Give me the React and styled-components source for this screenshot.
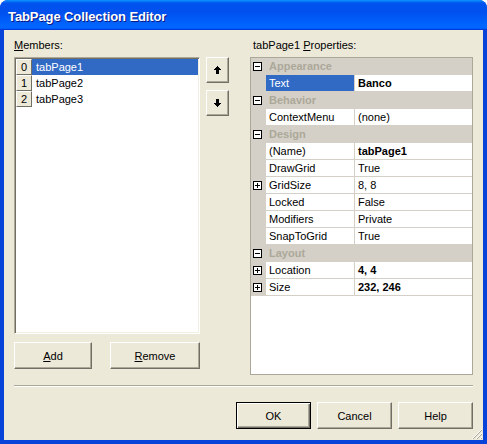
import React from "react";
import styled, { createGlobalStyle } from "styled-components";

const GlobalStyle = createGlobalStyle`
  html, body { margin: 0; padding: 0; background: #ffffff; }
  body { font-family: "Liberation Sans", Arial, sans-serif; font-size: 11px; color: #000; }
  * { box-sizing: border-box; }
`;

const Window = styled.div`
  width: 487px;
  height: 444px;
  display: flex;
  flex-direction: column;
  background: #0843d9;
  border-radius: 8px 8px 0 0;
  overflow: hidden;
`;

const TitleBar = styled.div`
  height: 30px;
  flex: none;
  display: flex;
  align-items: center;
  padding: 2px 0 0 8px;
  background: linear-gradient(180deg, #0997ff 0%, #0053ee 10%, #0050ee 40%, #0066ff 86%, #0066ff 92%, #005bff 95%, #003dd7 97%, #003dd7 100%);
  color: #fff;
  font-family: "Liberation Sans", Arial, sans-serif;
  font-weight: bold;
  font-size: 13px;
  text-shadow: 1px 1px 0 #0a1883;
  letter-spacing: -0.1px;
`;

const Client = styled.div`
  position: relative;
  flex: 1;
  margin: 0 4px 4px 4px;
  background: #ece9d8;
  padding: 9px 10px 11px 10px;
  display: flex;
  flex-direction: column;
`;

const Top = styled.div`
  display: flex;
  height: 336px;
`;

const LeftCol = styled.div`
  width: 186px;
  display: flex;
  flex-direction: column;
`;

const Label = styled.div`
  height: 13px;
  line-height: 13px;
  margin-bottom: 5px;
  padding-left: ${(p) => p.$indent || 0}px;
  white-space: nowrap;
`;

const Key = styled.span`
  text-decoration: underline;
  text-underline-offset: 1px;
`;

const ListBox = styled.div`
  height: 277px;
  background: #fff;
  border: 1px solid;
  border-color: #aca899 #fff #fff #aca899;
  box-shadow: inset 1px 1px 0 #716f64, inset -1px -1px 0 #f1efe2;
  padding: 1px;
`;

const ListRow = styled.div`
  display: flex;
  height: 16px;
`;

const IndexCell = styled.div`
  width: 16px;
  height: 16px;
  flex: none;
  background: #ece9d8;
  border: 1px solid;
  border-color: #fff #716f64 #716f64 #fff;
  text-align: center;
  line-height: 14px;
`;

const ItemText = styled.div`
  flex: 1;
  line-height: 16px;
  padding-left: 4px;
  background: ${(p) => (p.$selected ? "#316ac5" : "transparent")};
  color: ${(p) => (p.$selected ? "#fff" : "#000")};
`;

const ButtonRow = styled.div`
  display: flex;
  gap: ${(p) => p.$gap}px;
  justify-content: ${(p) => p.$justify || "flex-start"};
  margin-top: ${(p) => p.$top || 0}px;
`;

const Button = styled.button`
  width: ${(p) => p.$w}px;
  height: ${(p) => p.$h || 27}px;
  padding: 0;
  background: #ece9d8;
  font-family: "Liberation Sans", Arial, sans-serif;
  font-size: 11px;
  color: #000;
  border: 1px solid;
  border-color: ${(p) => (p.$default ? "#000" : "#fff #716f64 #716f64 #fff")};
  box-shadow: ${(p) =>
    p.$default
      ? "inset 1px 1px 0 #fff, inset -1px -1px 0 #716f64, inset -2px -2px 0 #aca899"
      : "inset -1px -1px 0 #aca899"};
  display: flex;
  align-items: center;
  justify-content: center;
`;

const ArrowCol = styled.div`
  width: 23px;
  margin-left: 6px;
  padding-top: 18px;
  display: flex;
  flex-direction: column;
  gap: 7px;
`;

const RightCol = styled.div`
  width: 223px;
  margin-left: 21px;
  display: flex;
  flex-direction: column;
`;

const Grid = styled.div`
  height: 318px;
  background: #fff;
  border: 1px solid #aca899;
`;

const GridRow = styled.div`
  display: flex;
  height: 17px;
  background: ${(p) => (p.$category ? "#d4d0c8" : "#fff")};
`;

const Gutter = styled.div`
  width: 15px;
  flex: none;
  background: #d4d0c8;
  display: flex;
  align-items: center;
  padding-left: 2px;
`;

const ExpandBox = styled.div`
  position: relative;
  width: 9px;
  height: 9px;
  border: 1px solid #000;
  background: #fff;
  &::before {
    content: "";
    position: absolute;
    left: 1px;
    top: 3px;
    width: 5px;
    height: 1px;
    background: #000;
  }
  &::after {
    content: "";
    display: ${(p) => (p.$plus ? "block" : "none")};
    position: absolute;
    left: 3px;
    top: 1px;
    width: 1px;
    height: 5px;
    background: #000;
  }
`;

const CategoryText = styled.div`
  flex: 1;
  padding-left: 3px;
  line-height: 16px;
  font-weight: bold;
  color: #aca899;
  border-bottom: 1px solid #d4d0c8;
`;

const NameCell = styled.div`
  width: 89px;
  flex: none;
  padding-left: 3px;
  line-height: 16px;
  border-bottom: 1px solid #d4d0c8;
  border-right: 1px solid #d4d0c8;
  background: ${(p) => (p.$selected ? "#316ac5" : "#fff")};
  color: ${(p) => (p.$selected ? "#fff" : "#000")};
  white-space: nowrap;
`;

const ValueCell = styled.div`
  flex: 1;
  padding-left: 3px;
  line-height: 16px;
  border-bottom: 1px solid #d4d0c8;
  font-weight: ${(p) => (p.$bold ? "bold" : "normal")};
  white-space: nowrap;
`;

const Separator = styled.div`
  height: 2px;
  margin-top: 10px;
  border-top: 1px solid #aca899;
  border-bottom: 1px solid #fff;
`;

const Grip = styled.svg`
  position: absolute;
  right: 0;
  bottom: 0;
`;

const ArrowIcon = ({ down }) => (
  <svg width="7" height="8" viewBox="0 0 7 8" shapeRendering="crispEdges" style={down ? { transform: "rotate(180deg)" } : undefined}>
    <path d="M3 0h1v1h1v1h1v1h1v1H5v4H2V4H0V3h1V2h1V1h1z" fill="#000" />
  </svg>
);

const members = ["tabPage1", "tabPage2", "tabPage3"];

const rows = [
  { cat: "Appearance" },
  { name: "Text", value: "Banco", bold: true, selected: true },
  { cat: "Behavior" },
  { name: "ContextMenu", value: "(none)" },
  { cat: "Design" },
  { name: "(Name)", value: "tabPage1", bold: true },
  { name: "DrawGrid", value: "True" },
  { name: "GridSize", value: "8, 8", plus: true },
  { name: "Locked", value: "False" },
  { name: "Modifiers", value: "Private" },
  { name: "SnapToGrid", value: "True" },
  { cat: "Layout" },
  { name: "Location", value: "4, 4", bold: true, plus: true },
  { name: "Size", value: "232, 246", bold: true, plus: true },
];

export default function App() {
  return (
    <>
      <GlobalStyle />
      <Window>
        <TitleBar>TabPage Collection Editor</TitleBar>
        <Client>
          <Top>
            <LeftCol>
              <Label>
                <Key>M</Key>embers:
              </Label>
              <ListBox>
                {members.map((m, i) => (
                  <ListRow key={m}>
                    <IndexCell>{i}</IndexCell>
                    <ItemText $selected={i === 0}>{m}</ItemText>
                  </ListRow>
                ))}
              </ListBox>
              <ButtonRow $gap={18} $top={8}>
                <Button $w={78}>
                  <span><Key>A</Key>dd</span>
                </Button>
                <Button $w={90}>
                  <span><Key>R</Key>emove</span>
                </Button>
              </ButtonRow>
            </LeftCol>
            <ArrowCol>
              <Button $w={23} $h={26}>
                <ArrowIcon />
              </Button>
              <Button $w={23} $h={26}>
                <ArrowIcon down />
              </Button>
            </ArrowCol>
            <RightCol>
              <Label $indent={3}>
                tabPage1 <Key>P</Key>roperties:
              </Label>
              <Grid>
                {rows.map((r, i) =>
                  r.cat ? (
                    <GridRow key={i} $category>
                      <Gutter>
                        <ExpandBox />
                      </Gutter>
                      <CategoryText>{r.cat}</CategoryText>
                    </GridRow>
                  ) : (
                    <GridRow key={i}>
                      <Gutter>{r.plus && <ExpandBox $plus />}</Gutter>
                      <NameCell $selected={r.selected}>{r.name}</NameCell>
                      <ValueCell $bold={r.bold}>{r.value}</ValueCell>
                    </GridRow>
                  )
                )}
              </Grid>
            </RightCol>
          </Top>
          <Separator />
          <ButtonRow $gap={6} $top={15} $justify="flex-end">
            <Button $w={75} $default>OK</Button>
            <Button $w={75}>Cancel</Button>
            <Button $w={75}>Help</Button>
          </ButtonRow>
          <Grip width="12" height="12" viewBox="0 0 12 12" shapeRendering="crispEdges">
            <path d="M11 1L1 11M11 5L5 11M11 9L9 11" stroke="#fff" strokeWidth="1" />
            <path d="M11 2L2 11M11 6L6 11M11 10L10 11" stroke="#aca899" strokeWidth="1" />
          </Grip>
        </Client>
      </Window>
    </>
  );
}
